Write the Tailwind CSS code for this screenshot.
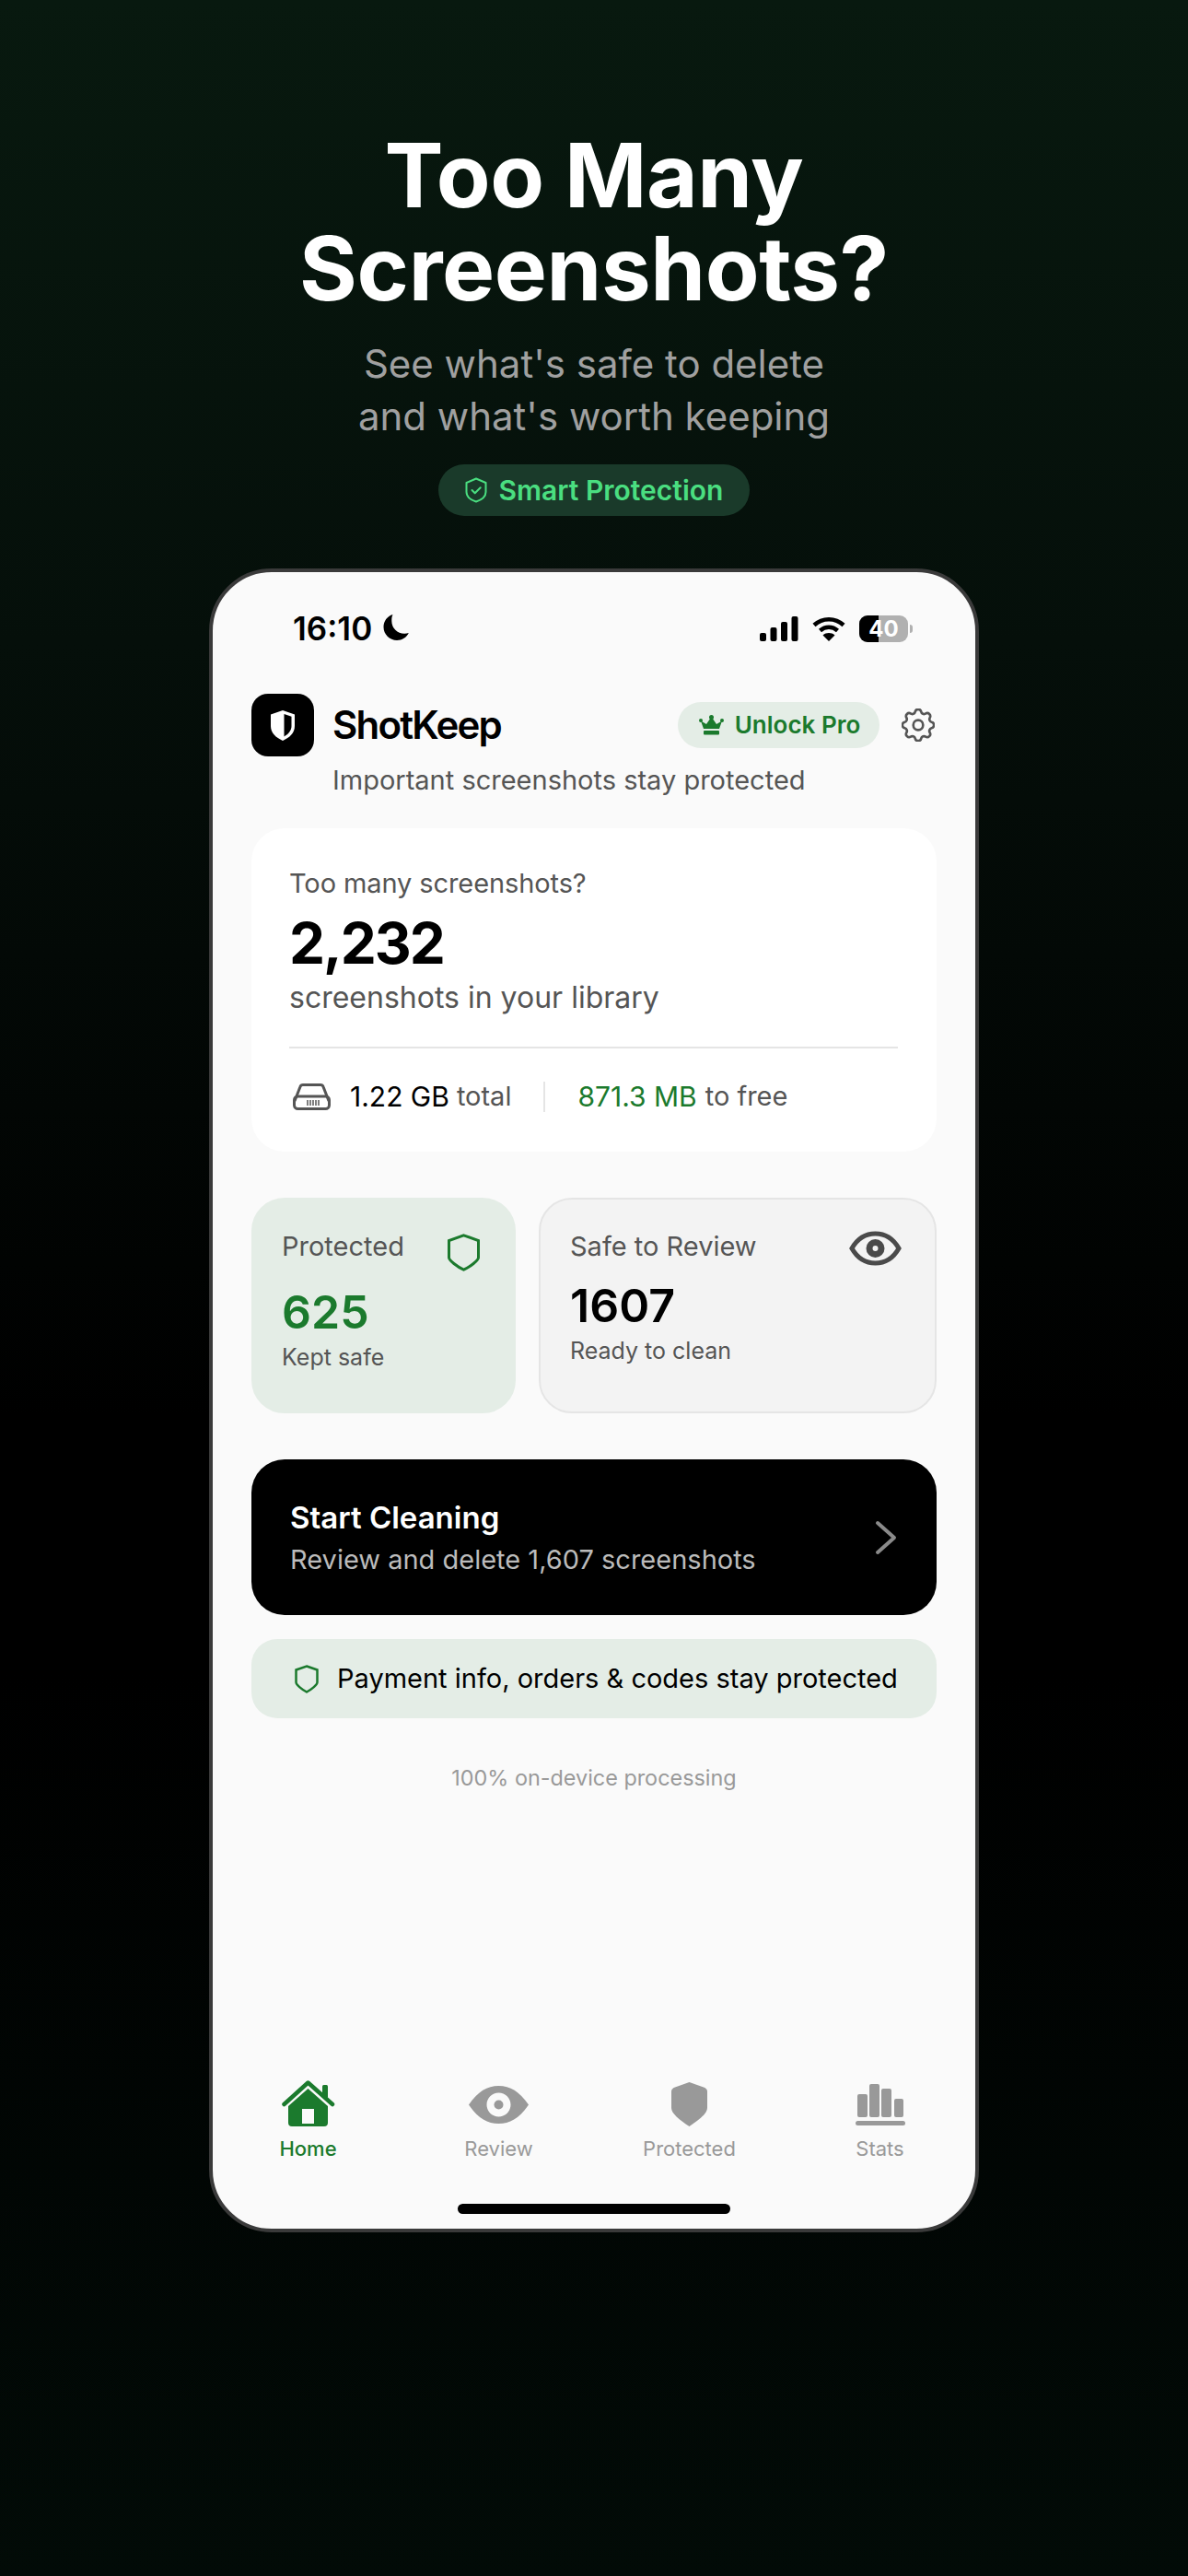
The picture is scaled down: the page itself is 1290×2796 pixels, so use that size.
<!DOCTYPE html>
<html lang="en">
<head>
  <meta charset="UTF-8" />
  <meta name="viewport" content="width=device-width, initial-scale=1.0"/>
  <title>ShotKeep</title>
  <script src="https://cdn.jsdelivr.net/npm/@tailwindcss/browser@4"></script>
</head>
<body class="font-['Inter',sans-serif] bg-black">
  <div class="w-[1290px] h-[2796px] overflow-hidden flex flex-col items-center bg-[linear-gradient(180deg,#08190f_0%,#050f0a_25%,#000000_55%,#000000_65%,#020b07_100%)]">

    <!-- Headline -->
    <h1 class="pt-[140px] text-center text-white text-[96px] leading-[101px] font-bold tracking-[-0.4px]">Too Many<br>Screenshots?</h1>
    <p class="mt-[24px] text-center text-[#a0a0a0] text-[42px] leading-[57px]">See what's safe to delete<br>and what's worth keeping</p>
    <div class="mt-[24px] h-[56px] w-[338px] rounded-full bg-[#1a3a2a] flex items-center justify-center gap-[13px]">
      <svg class="w-[24px] h-[28px]" viewBox="0 0 24 28" fill="none" stroke="#4ade80" stroke-width="2" stroke-linejoin="round" stroke-linecap="round"><path d="M12 1.500 22.500 6v10c0 5-4.500 8.500-10.500 10.500C6 24.500 1.500 21 1.500 16V6z"/><path d="M7.500 14l3.200 3.200 6-6"/></svg>
      <span class="text-[#4ade80] text-[30px] leading-[36px] font-semibold">Smart Protection</span>
    </div>

    <!-- Phone -->
    <div class="mt-[57px] w-[836px] h-[1806px] rounded-[68px] border-[4px] border-[#3a3a3a] bg-[#fafafa] flex flex-col overflow-hidden">

      <!-- Status bar -->
      <div class="pt-[41px] pl-[87px] pr-[68px] flex items-center justify-between h-[81px]">
        <div class="flex items-center gap-[11px]">
          <span class="text-black text-[35px] leading-[40px] font-semibold">16:10</span>
          <svg class="w-[30px] h-[30px] mt-[-2px]" viewBox="0 0 30 30" fill="#000"><path d="M11.500 1C5.500 2.800 1.500 8.200 1.500 14.500 1.500 22.500 8 29 16 29c5.600 0 10.500-3.200 12.800-8-1.400.5-3 .8-4.600.8-7.700 0-13.900-6.200-13.900-13.900 0-2.400.1-4.800 1.200-6.900z"/></svg>
        </div>
        <div class="flex items-center">
          <svg class="w-[42px] h-[27px]" viewBox="0 0 42 27" fill="#000"><rect x="0" y="18" width="7" height="9" rx="2"/><rect x="11.500" y="12" width="7" height="15" rx="2"/><rect x="23" y="6" width="7" height="21" rx="2"/><rect x="34.500" y="0" width="7" height="27" rx="2"/></svg>
          <svg class="w-[36px] h-[27px] ml-[15px]" viewBox="0 0 36 27" fill="none" stroke="#000" stroke-width="4.500"><path d="M2 9.500C11 1 25 1 34 9.500"/><path d="M8.500 15.500c5.500-5 13.500-5 19 0"/><path fill="#000" stroke="none" d="M18 27l-6.500-6.500c3.800-3.200 9.200-3.200 13 0z"/></svg>
          <div class="ml-[15px] relative w-[53px] h-[29px] rounded-[9px] overflow-hidden bg-[#b0b0b0] flex items-center justify-center">
            <div class="absolute left-0 top-0 bottom-0 w-[21px] bg-black"></div>
            <span class="relative text-white text-[24px] leading-[29px] font-bold">40</span>
          </div>
          <div class="ml-[2px] w-[3px] h-[9px] rounded-r-full bg-[#b0b0b0]"></div>
        </div>
      </div>

      <div class="px-[42px]">
        <!-- App header -->
        <div class="mt-[51px] h-[68px] flex items-center">
          <div class="w-[68px] h-[68px] rounded-[18px] bg-black flex items-center justify-center">
            <svg class="w-[28px] h-[33px]" viewBox="0 0 28 33"><path fill="#fff" d="M14 0 27 4.500V17c0 7.500-5.500 12.500-13 16C6.500 29.500 1 24.500 1 17V4.500z"/><path fill="#000" d="M15.500 4 23.500 6.800V17c0 5-3.300 8.800-8 11.400z"/></svg>
          </div>
          <span class="ml-[20px] text-black text-[42px] leading-[50px] font-semibold tracking-[-1.8px]">ShotKeep</span>
          <div class="ml-auto h-[50px] w-[219px] rounded-full bg-[#e4ede6] flex items-center justify-center gap-[12px] pl-[2px]">
            <svg class="w-[27px] h-[22px]" viewBox="0 0 27 22" fill="#1b7a2d"><path d="M5 15 2 6.500 8 10l5.500-8L19 10l6-3.500L22 15z"/><circle cx="13.500" cy="2.500" r="2.500"/><circle cx="2" cy="6" r="2"/><circle cx="25" cy="6" r="2"/><rect x="5" y="17" width="17" height="4.500" rx="1"/></svg>
            <span class="text-[#1b7a2d] text-[26px] leading-[32px] font-semibold">Unlock Pro</span>
          </div>
          <svg class="ml-[24px] mr-[2px] w-[36px] h-[36px]" viewBox="2.500 2.500 19 19" fill="none" stroke="#555" stroke-width="1.400" stroke-linecap="round" stroke-linejoin="round"><path d="M10.300 4.300c.4-1.800 3-1.800 3.400 0a1.700 1.700 0 0 0 2.600 1.100c1.500-.9 3.300.8 2.400 2.400a1.700 1.700 0 0 0 1 2.500c1.800.4 1.800 3 0 3.400a1.700 1.700 0 0 0-1 2.600c.9 1.500-.9 3.300-2.400 2.400a1.700 1.700 0 0 0-2.600 1c-.4 1.800-3 1.800-3.400 0a1.700 1.700 0 0 0-2.600-1c-1.500.9-3.300-.9-2.400-2.400a1.700 1.700 0 0 0-1-2.600c-1.800-.4-1.800-3 0-3.400a1.700 1.700 0 0 0 1-2.500c-.9-1.600.9-3.300 2.400-2.400a1.700 1.700 0 0 0 2.600-1.100z"/><circle cx="12" cy="12" r="2.800"/></svg>
        </div>
        <p class="mt-[8px] ml-[88px] text-[#555555] text-[29px] leading-[36px]">Important screenshots stay protected</p>

        <!-- Library card -->
        <div class="mt-[34px] h-[351px] rounded-[36px] bg-white pl-[41px] pr-[42px] pt-[42px]">
          <p class="text-[#555555] text-[29px] leading-[36px] tracking-[-0.1px]">Too many screenshots?</p>
          <p class="mt-[12px] text-black text-[62px] leading-[70px] font-bold tracking-[-2px]">2,232</p>
          <p class="mt-[4px] text-[#555555] text-[32px] leading-[40px]">screenshots in your library</p>
          <div class="mt-[33px] h-[2px] bg-[#e5e5e5]"></div>
          <div class="mt-[32px] h-[40px] flex items-center text-[29px] leading-[40px]">
            <svg class="ml-[4px] w-[41px] h-[29px]" viewBox="0 0 41 29" fill="none" stroke="#555" stroke-width="3"><path d="M2 19 8 3.500C8.500 2 10 1.500 11 1.500h19c1 0 2.500.5 3 2L39 19"/><rect x="1.500" y="14" width="38" height="13.500" rx="4"/><path stroke-width="1.500" d="M16 18v6M19 18v6M22 18v6M25 18v6M28 18v6"/></svg>
            <span class="ml-[21px] text-black text-[30px]">1.22 GB</span>
            <span class="ml-[8px] text-[#555555]">total</span>
            <div class="ml-[35px] w-[2px] h-[33px] bg-[#e5e5e5]"></div>
            <span class="ml-[35px] text-[#1b7a2d] text-[30px]">871.3 MB</span>
            <span class="ml-[9px] text-[#555555]">to free</span>
          </div>
        </div>

        <!-- Stat cards -->
        <div class="mt-[50px] flex gap-[25px] h-[234px]">
          <div class="w-[287px] rounded-[36px] bg-[#e4ede6] border-2 border-[#e4ede6] pl-[31px] pr-[37px] pt-[32px]">
            <div class="flex justify-between h-[46px]">
              <span class="mt-[1px] text-[#555555] text-[29px] leading-[36px]">Protected</span>
              <svg class="mt-[5px] w-[35px] h-[41px]" viewBox="0 0 35 41" fill="none" stroke="#1b7a2d" stroke-width="3"><path d="M17.500 1.800 33.500 7.500V26c0 3-9 10-16 13.200C10.500 36 1.500 29 1.500 26V7.500z"/></svg>
            </div>
            <p class="mt-[16px] text-[#1b7a2d] text-[50px] leading-[56px] font-semibold">625</p>
            <p class="mt-[5px] text-[#555555] text-[25px] leading-[32px]">Kept safe</p>
          </div>
          <div class="flex-1 rounded-[36px] bg-[#f3f3f3] border-2 border-[#e5e5e5] pl-[32px] pr-[36px] pt-[32px]">
            <div class="flex justify-between h-[40px]">
              <span class="mt-[1px] text-[#555555] text-[29px] leading-[36px]">Safe to Review</span>
              <svg class="mt-[2px] w-[57px] h-[38px]" viewBox="0 0 57 38" fill="none" stroke="#4a4a4a" stroke-width="5"><path d="M3 19C9 8.500 18 3 28.500 3S48 8.500 54 19C48 29.500 39 35 28.500 35S9 29.500 3 19z"/><circle cx="28.500" cy="19" r="6.500" fill="#f3f3f3" stroke-width="7"/></svg>
            </div>
            <p class="mt-[15px] text-black text-[50px] leading-[56px] font-semibold">1607</p>
            <p class="mt-[5px] text-[#555555] text-[25px] leading-[32px]">Ready to clean</p>
          </div>
        </div>

        <!-- Start cleaning -->
        <div class="mt-[50px] h-[169px] rounded-[36px] bg-black flex items-center justify-between pl-[42px] pr-[43px]">
          <div>
            <p class="text-white text-[33px] leading-[40px] font-semibold">Start Cleaning</p>
            <p class="mt-[8px] text-[#bbbbbb] text-[29px] leading-[36px]">Review and delete 1,607 screenshots</p>
          </div>
          <svg class="w-[24px] h-[38px]" viewBox="0 0 24 38" fill="none" stroke="#8a8a8a" stroke-width="4" stroke-linecap="round" stroke-linejoin="round"><path d="M3 3 21 19 3 35"/></svg>
        </div>

        <!-- Reassurance -->
        <div class="mt-[26px] h-[86px] rounded-[28px] bg-[#e4ede6] flex items-center pl-[47px]">
          <svg class="w-[26px] h-[31px]" viewBox="0 0 26 31" fill="none" stroke="#1b7a2d" stroke-width="2.500"><path d="M13 1.500 24.500 5.500V19c0 2.500-6 7.500-11.500 10.500C7.500 26.500 1.500 21.500 1.500 19V5.500z"/></svg>
          <span class="ml-[20px] text-black text-[29px] leading-[36px]">Payment info, orders &amp; codes stay protected</span>
        </div>
        <p class="mt-[50px] text-center text-[#999999] text-[23.400px] leading-[30px]">100% on-device processing</p>
      </div>

      <!-- Tab bar -->
      <div class="mt-auto grid grid-cols-4">
        <div class="flex flex-col items-center">
          <div class="h-[52px] flex items-center">
            <svg class="w-[58px] h-[52px]" viewBox="0 0 58 52"><path fill="none" stroke="#1b7a2d" stroke-width="4.500" stroke-linecap="round" stroke-linejoin="round" d="M2.500 26 28.500 2.500 55 26"/><rect x="44" y="5" width="6" height="14" rx="1.500" fill="#1b7a2d"/><path fill="#1b7a2d" fill-rule="evenodd" d="M28.500 9 50 28V46q0 4-4 4H11q-4 0-4-4V28zM22 31V47H35V31z"/></svg>
          </div>
          <span class="mt-[8px] text-[#1b7a2d] text-[22px] leading-[28px] font-medium">Home</span>
        </div>
        <div class="flex flex-col items-center">
          <div class="h-[52px] flex items-center">
            <svg class="w-[65px] h-[41px]" viewBox="0 0 65 41"><path fill="#999" fill-rule="evenodd" d="M0 20.500C10 6 20 0 32.500 0S55 6 65 20.500C55 35 45 41 32.500 41S10 35 0 20.500zM32.500 7.500C25.300 7.500 19.500 13.300 19.500 20.500S25.300 33.500 32.500 33.500 45.500 27.700 45.500 20.500 39.700 7.500 32.500 7.500z"/><circle cx="32.500" cy="20.500" r="5" fill="#999"/></svg>
          </div>
          <span class="mt-[8px] text-[#999999] text-[22px] leading-[28px]">Review</span>
        </div>
        <div class="flex flex-col items-center">
          <div class="h-[52px] flex items-center">
            <svg class="w-[39px] h-[48px]" viewBox="0 0 39 48"><path fill="#999" d="M19.500 0 35 5.500Q39 7 39 10V28C39 34 30 41 19.500 48 9 41 0 34 0 28V10Q0 7 4 5.500z"/></svg>
          </div>
          <span class="mt-[8px] text-[#999999] text-[22px] leading-[28px]">Protected</span>
        </div>
        <div class="flex flex-col items-center">
          <div class="h-[52px] flex items-center">
            <svg class="w-[54px] h-[45px]" viewBox="0 0 54 45" fill="#999"><rect x="2" y="11" width="11" height="25" rx="2"/><rect x="15" y="0" width="11" height="36" rx="2"/><rect x="28" y="5" width="11" height="31" rx="2"/><rect x="42" y="16" width="10" height="20" rx="2"/><rect x="0" y="40" width="54" height="5" rx="2.500"/></svg>
          </div>
          <span class="mt-[8px] text-[#999999] text-[22px] leading-[28px]">Stats</span>
        </div>
      </div>

      <!-- Home indicator -->
      <div class="mt-[46px] mb-[16px] mx-auto w-[296px] h-[11px] rounded-full bg-black"></div>
    </div>
  </div>
</body>
</html>
